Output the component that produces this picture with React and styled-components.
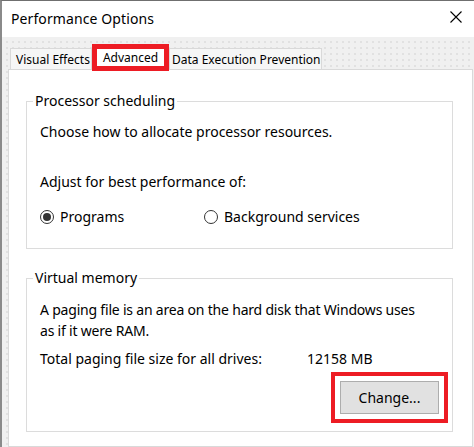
import React from "react";
import styled, { createGlobalStyle } from "styled-components";

const GlobalStyle = createGlobalStyle`
  html, body { margin: 0; padding: 0; }
  body {
    font-family: "Noto Sans", "Open Sans", sans-serif;
    color: #000;
    background: #f0f0f0;
  }
  * { box-sizing: border-box; }
`;

const Window = styled.div`
  width: 474px;
  height: 447px;
  overflow: hidden;
  border-top: 1px solid #6f6f6f;
  border-left: 2px solid #8a8a8a;
  display: flex;
  flex-direction: column;
`;

const TitleBar = styled.div`
  height: 36px;
  flex: none;
  background: #fff;
  display: flex;
  align-items: center;
  justify-content: space-between;
  padding: 0 12px 0 9px;
`;

const Title = styled.span`
  font-size: 14px;
  line-height: 20px;
  margin-top: 0px;
  letter-spacing: 0.1px;
`;

const CloseIcon = styled.svg`
  width: 12px;
  height: 12px;
  margin-top: -4px;
`;

const Body = styled.div`
  flex: 1;
  display: flex;
  flex-direction: column;
  padding: 7px 0 0 6px;
  background-color: #f0f0f0;
  background-image: radial-gradient(circle, #dcdcdc 0.6px, transparent 1px);
  background-size: 6px 6px;
  background-position: 2px 2px;
`;

const TabRow = styled.div`
  display: flex;
  align-items: flex-end;
  height: 25px;
  padding-left: 2px;
  position: relative;
  z-index: 1;
`;

const Tab = styled.div`
  width: ${(p) => p.$w}px;
  height: ${(p) => (p.$active ? 27 : 21)}px;
  margin-bottom: ${(p) => (p.$active ? -2 : 0)}px;
  display: flex;
  align-items: center;
  justify-content: ${(p) => (p.$active ? "center" : "flex-start")};
  padding-left: ${(p) => (p.$active ? 0 : p.$pad)}px;
  font-size: 12px;
  white-space: nowrap;
  background: ${(p) => (p.$active ? "#fff" : "#f6f6f6")};
  border: ${(p) => (p.$active ? "5px solid #ed1c24" : "1px solid #d9d9d9")};
  border-bottom: ${(p) => (p.$active ? "5px solid #ed1c24" : "none")};
  ${(p) => (p.$active ? "padding-bottom: 1px;" : "padding-top: 1px;")}
`;

const Panel = styled.div`
  flex: 1;
  width: 465px;
  background: #fff;
  border: 1px solid #d9d9d9;
  padding: 31px 0 0 17px;
  display: flex;
  flex-direction: column;
`;

const GroupBox = styled.div`
  position: relative;
  width: 427px;
  border: 1px solid #dcdcdc;
  padding: ${(p) => p.$pad};
  margin-top: ${(p) => p.$mt || 0}px;
  font-size: 14px;
`;

const Legend = styled.span`
  position: absolute;
  top: -11px;
  left: 6px;
  padding: 0 2px;
  background: #fff;
  font-size: 14px;
  line-height: 20px;
`;

const Line = styled.div`
  line-height: ${(p) => p.$lh || 20}px;
  margin-top: ${(p) => p.$mt || 0}px;
  letter-spacing: ${(p) => p.$ls || 0}px;
`;

const RadioRow = styled.div`
  display: grid;
  grid-template-columns: 164px auto;
  margin-top: 15px;
  height: 20px;
`;

const RadioOption = styled.label`
  display: flex;
  align-items: center;
  gap: 6px;
  line-height: 20px;
`;

const RadioCircle = styled.span`
  width: 14px;
  height: 14px;
  border-radius: 50%;
  border: 1px solid #333;
  display: flex;
  align-items: center;
  justify-content: center;
  &::after {
    content: "";
    width: 8px;
    height: 8px;
    border-radius: 50%;
    background: ${(p) => (p.$checked ? "#333" : "transparent")};
  }
`;

const InfoRow = styled.div`
  display: grid;
  grid-template-columns: 267px auto;
  line-height: 20px;
  margin-top: 8px;
`;

const ButtonRow = styled.div`
  display: flex;
  justify-content: flex-end;
  margin-top: 12px;
`;

const Button = styled.button`
  width: 99px;
  height: 33px;
  background: #e1e1e1;
  border: 1px solid #adadad;
  font-family: "Noto Sans", "Open Sans", sans-serif;
  font-size: 14px;
  color: #000;
  padding: 0;
  outline: 4px solid #ed1c24;
  outline-offset: 5px;
`;

export default function App() {
  return (
    <>
      <GlobalStyle />
      <Window>
        <TitleBar>
          <Title>Performance Options</Title>
          <CloseIcon viewBox="0 0 12 12">
            <path d="M0.5 0.5 L11.5 11.5 M11.5 0.5 L0.5 11.5" stroke="#000" strokeWidth="1.1" fill="none" />
          </CloseIcon>
        </TitleBar>
        <Body>
          <TabRow>
            <Tab $w={82} $pad={5}>Visual Effects</Tab>
            <Tab $w={77} $active>Advanced</Tab>
            <Tab $w={153} $pad={2}>Data Execution Prevention</Tab>
          </TabRow>
          <Panel>
            <GroupBox $pad="20px 13px 21px 13px">
              <Legend>Processor scheduling</Legend>
              <Line>Choose how to allocate processor resources.</Line>
              <Line $mt={30}>Adjust for best performance of:</Line>
              <RadioRow>
                <RadioOption>
                  <RadioCircle $checked />
                  Programs
                </RadioOption>
                <RadioOption>
                  <RadioCircle />
                  Background services
                </RadioOption>
              </RadioRow>
            </GroupBox>
            <GroupBox $pad="20px 13px 17px 13px" $mt={29}>
              <Legend>Virtual memory</Legend>
              <Line $lh={21} $ls={-0.2}>
                A paging file is an area on the hard disk that Windows uses
                <br />
                as if it were RAM.
              </Line>
              <InfoRow>
                <span>Total paging file size for all drives:</span>
                <span>12158 MB</span>
              </InfoRow>
              <ButtonRow>
                <Button>Change...</Button>
              </ButtonRow>
            </GroupBox>
          </Panel>
        </Body>
      </Window>
    </>
  );
}
